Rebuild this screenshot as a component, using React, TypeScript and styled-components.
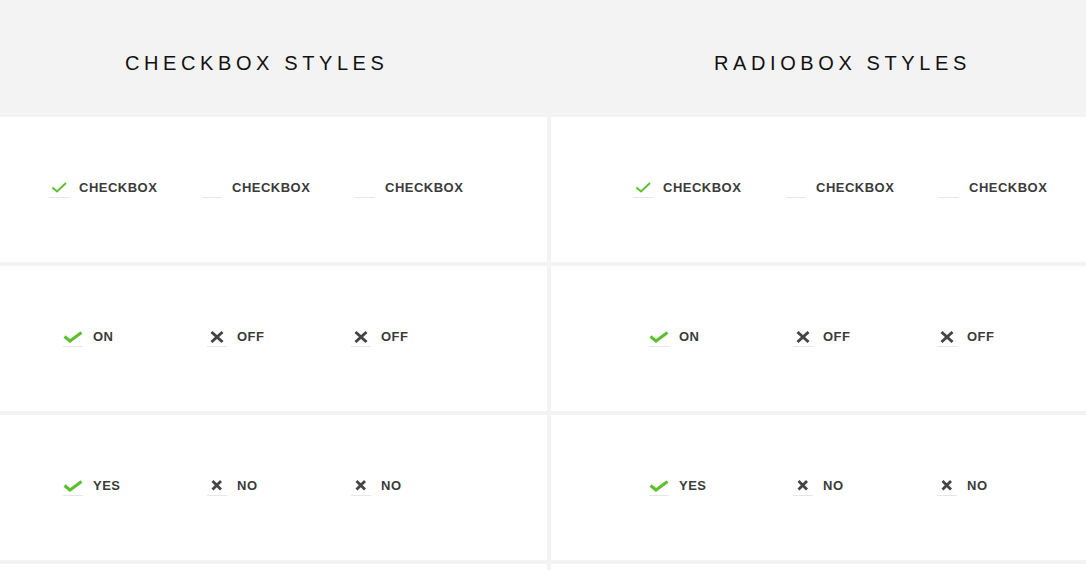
import React from "react";
import styled, { createGlobalStyle } from "styled-components";

const GlobalStyle = createGlobalStyle`
  body {
    margin: 0;
    background: #fff;
    font-family: "Liberation Sans", Arial, sans-serif;
  }
`;

const Page = styled.div`
  width: 1086px;
  background: #f3f3f3;
`;

const Header = styled.div`
  display: grid;
  grid-template-columns: 547px 1fr;
  column-gap: 4px;
  height: 117px;
  background: #f3f3f3;
`;

const Title = styled.h2<{ $offset: number }>`
  margin: 0;
  padding: 53px 0 0 ${(p) => p.$offset}px;
  font-size: 20px;
  line-height: 20px;
  font-weight: 400;
  letter-spacing: 4.6px;
  color: #111;
`;

const Grid = styled.div`
  display: grid;
  grid-template-columns: 547px 1fr;
  gap: 4px;
  background: #f3f3f3;
`;

const Cell = styled.div<{ $offset: number }>`
  display: flex;
  align-items: center;
  height: 145px;
  padding: 0 0 4px ${(p) => p.$offset}px;
  box-sizing: border-box;
  background: #fff;
`;

const Option = styled.label<{ $width: number }>`
  display: flex;
  align-items: center;
  gap: 10px;
  width: ${(p) => p.$width}px;
  flex-shrink: 0;
`;

const Box = styled.span`
  display: block;
  width: 20px;
  height: 20px;
  box-sizing: border-box;
  border-bottom: 1px solid #e6e6e6;

  svg {
    display: block;
  }
`;

const Label = styled.span`
  font-size: 13px;
  font-weight: 700;
  letter-spacing: 0.5px;
  color: #3b3b3b;
`;

type Mark = "none" | "tick" | "tickBold" | "cross" | "crossSmall";

const Icon: React.FC<{ mark: Mark }> = ({ mark }) => {
  if (mark === "none") return null;
  return (
    <svg width="20" height="19" viewBox="0 0 20 19">
      {mark === "tick" && (
        <path d="M3.5 9.5 L8 13.5 L17 5" fill="none" stroke="#5fbf32" strokeWidth="2" />
      )}
      {mark === "tickBold" && (
        <path d="M1.5 9.5 L7 14 L18.5 5.5" fill="none" stroke="#5fbf32" strokeWidth="3.2" />
      )}
      {mark === "cross" && (
        <path d="M4.5 5 L15.5 15 M15.5 5 L4.5 15" fill="none" stroke="#444" strokeWidth="3" />
      )}
      {mark === "crossSmall" && (
        <path d="M5.5 5 L14 13.5 M14 5 L5.5 13.5" fill="none" stroke="#444" strokeWidth="2.8" />
      )}
    </svg>
  );
};

type Row = { width: number; offset: number; shift: number; items: [Mark, string][] };

const rows: Row[] = [
  {
    width: 153,
    offset: 49,
    shift: 33,
    items: [
      ["tick", "CHECKBOX"],
      ["none", "CHECKBOX"],
      ["none", "CHECKBOX"],
    ],
  },
  {
    width: 144,
    offset: 63,
    shift: 35,
    items: [
      ["tickBold", "ON"],
      ["cross", "OFF"],
      ["cross", "OFF"],
    ],
  },
  {
    width: 144,
    offset: 63,
    shift: 35,
    items: [
      ["tickBold", "YES"],
      ["crossSmall", "NO"],
      ["crossSmall", "NO"],
    ],
  },
  // next row starts just below the visible area
  { width: 144, offset: 63, shift: 35, items: [] },
];

const App: React.FC = () => {
  return (
    <Page>
      <GlobalStyle />
      <Header>
        <Title $offset={125}>CHECKBOX STYLES</Title>
        <Title $offset={163}>RADIOBOX STYLES</Title>
      </Header>
      <Grid>
        {rows.map((row, i) =>
          [0, row.shift].map((shift) => (
            <Cell key={`${i}-${shift}`} $offset={row.offset + shift}>
              {row.items.map(([mark, text], j) => (
                <Option key={j} $width={row.width}>
                  <Box>
                    <Icon mark={mark} />
                  </Box>
                  <Label>{text}</Label>
                </Option>
              ))}
            </Cell>
          ))
        )}
      </Grid>
    </Page>
  );
};

export default App;
